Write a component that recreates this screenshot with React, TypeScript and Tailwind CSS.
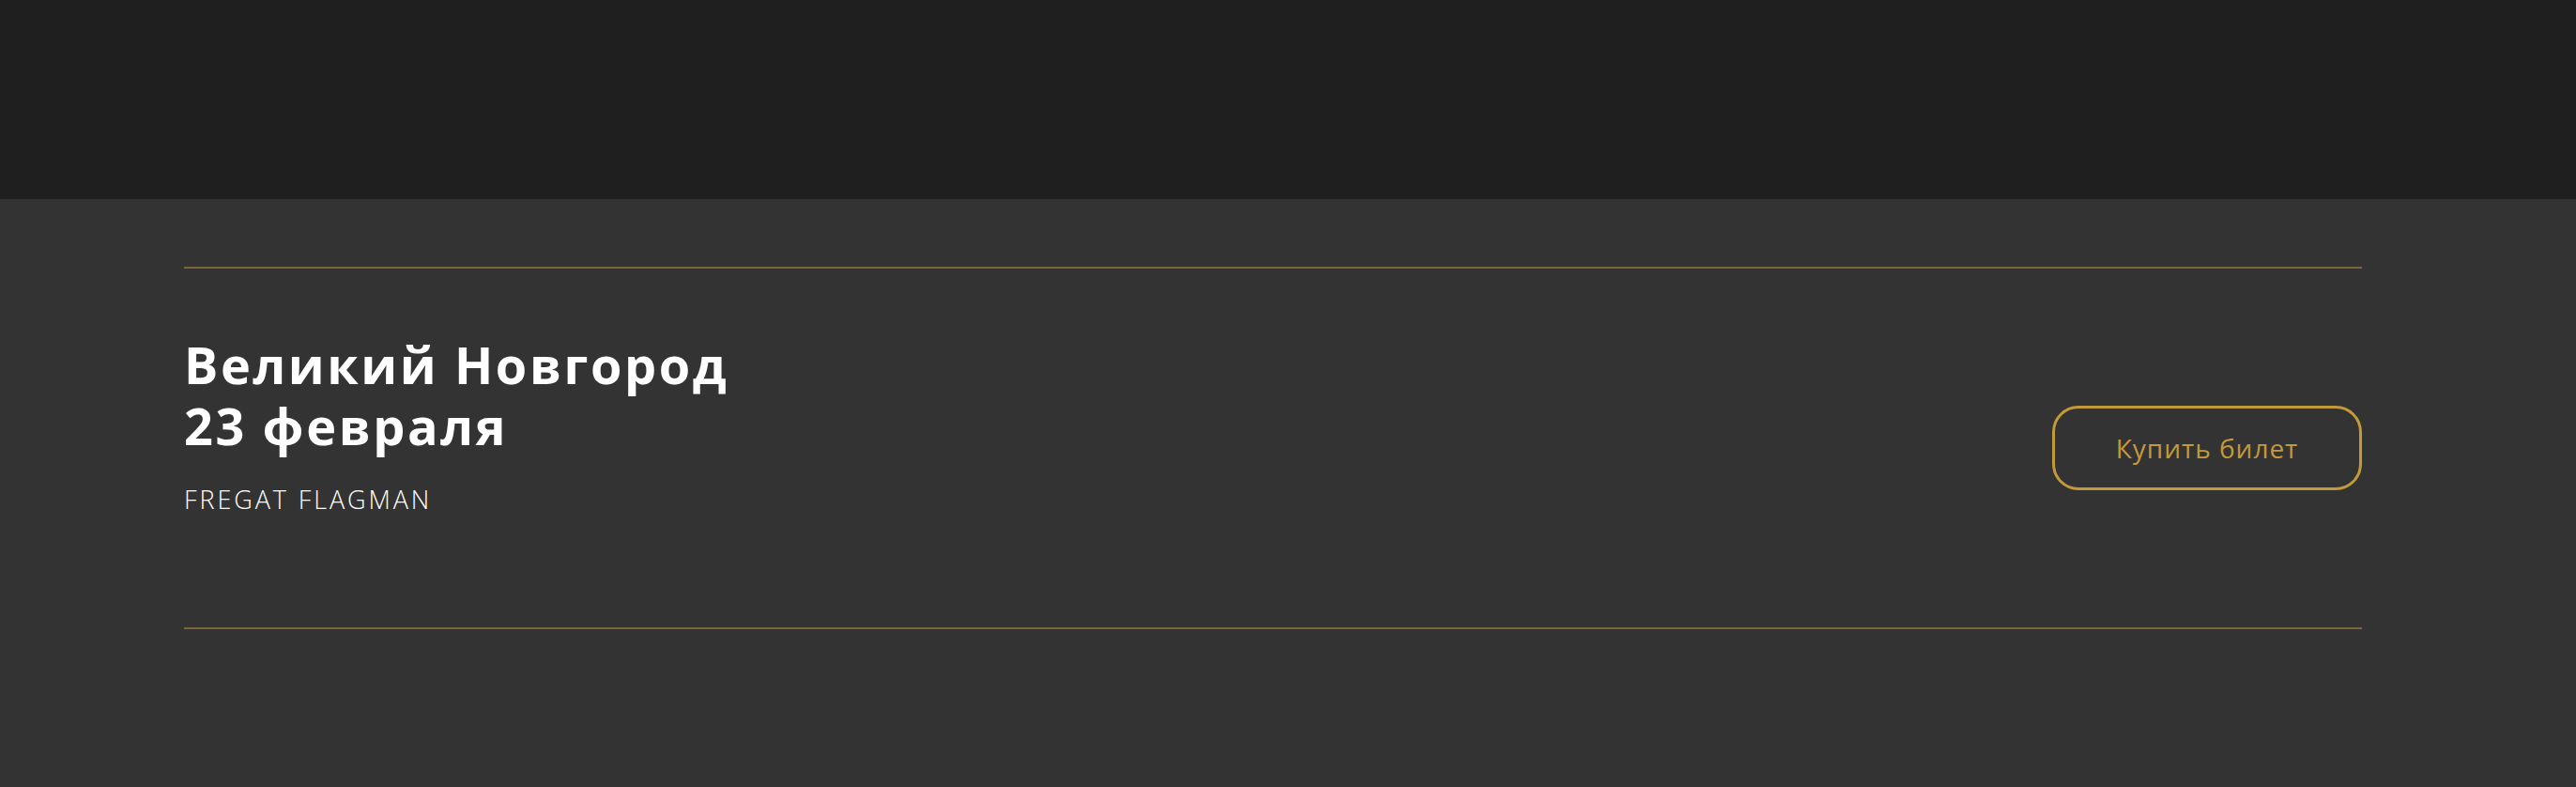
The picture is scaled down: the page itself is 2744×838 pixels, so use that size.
import React from "react";

export default function App() {
  return (
    <div className="w-[2744px] h-[838px] flex flex-col bg-[#333333]" style={{ fontFamily: '"Open Sans", "Noto Sans", sans-serif' }}>
      <div className="h-[212px] bg-[#1f1f1f] shrink-0" />
      <div className="flex-1 pt-[72px]">
        <div className="ml-[196px] w-[2320px]">
          <div className="h-[2px] bg-[#7b6636]" />
          <div className="h-[382px] flex items-start justify-between">
            <div className="pt-[70px]">
              <h1 className="text-[54px] leading-[65px] font-bold text-white tracking-[2.6px]">
                Великий Новгород
                <br />
                23 февраля
              </h1>
              <p className="mt-[30px] text-[27px] leading-[32px] font-light text-white uppercase tracking-[2.9px]">
                Fregat Flagman
              </p>
            </div>
            <button className="mt-[146px] w-[330px] h-[90px] rounded-[28px] border-[3px] border-[#c39a3a] text-[#c39a3a] text-[28px] font-normal tracking-[1px] flex items-center justify-center">
              Купить билет
            </button>
          </div>
          <div className="h-[2px] bg-[#7b6636]" />
        </div>
      </div>
    </div>
  );
}
